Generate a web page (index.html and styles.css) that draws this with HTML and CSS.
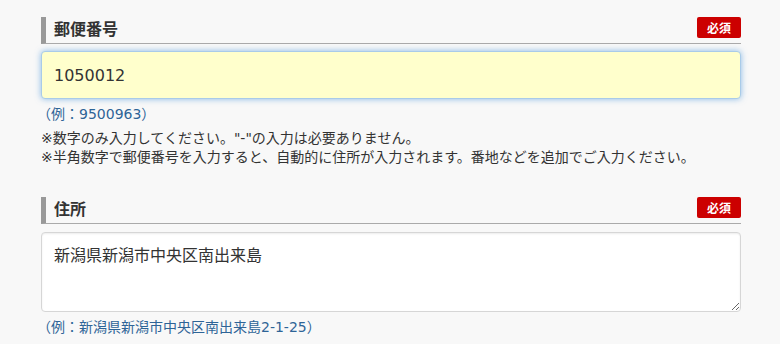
FILE: index.html
```html
<!DOCTYPE html>
<html lang="ja">
<head>
    <meta charset="UTF-8">
    <meta name="viewport" content="width=device-width, initial-scale=1.0">
    <title>住所入力</title>
    <link rel="stylesheet" href="styles.css">
</head>
<body>
    <form class="entry">
        <div class="field">
            <div class="field-head">
                <label for="zip" class="field-title">郵便番号</label>
                <span class="badge">必須</span>
            </div>
            <input type="text" id="zip" name="zip" class="text-box focused" value="1050012">
            <p class="sample">（例：9500963）</p>
            <p class="note">※数字のみ入力してください。"-"の入力は必要ありません。<br>※半角数字で郵便番号を入力すると、自動的に住所が入力されます。番地などを追加でご入力ください。</p>
        </div>

        <div class="field">
            <div class="field-head">
                <label for="address" class="field-title">住所</label>
                <span class="badge">必須</span>
            </div>
            <textarea id="address" name="address" class="text-box area">新潟県新潟市中央区南出来島</textarea>
            <p class="sample">（例：新潟県新潟市中央区南出来島2-1-25）</p>
        </div>
    </form>
</body>
</html>
```

FILE: styles.css
```css
body {
    margin: 0;
    padding: 17px 39px 0 41px;
    background-color: #f8f8f8;
    /* Verdana-like latin, CJK from Noto */
    font-family: "DejaVu Sans", "Noto Sans CJK JP", sans-serif;
    color: #333;
}
.field {
    margin-bottom: 30px;
}
/* heading row with the grey bar on the left and underline */
.field-head {
    display: flex;
    justify-content: space-between;
    align-items: flex-start;
    height: 26px;
    border-left: 5px solid #999;
    border-bottom: 1px solid #aaa;
    padding-left: 8px;
}
.field-title {
    font-family: "Noto Sans CJK JP", sans-serif;
    font-size: 16px;
    font-weight: bold;
    line-height: 23px;
    color: #333;
}
.badge {
    font-family: "Noto Sans CJK JP", sans-serif;
    background-color: #cc0000;
    color: #fff;
    font-size: 12px;
    font-weight: bold;
    line-height: 21px;
    height: 21px;
    padding: 0 10px;
    border-radius: 2px;
}
.text-box {
    display: block;
    width: 100%;
    box-sizing: border-box;
    margin: 7px 0 0;
    padding: 0 12px;
    border: 1px solid #d6d6d6;
    border-radius: 4px;
    background: #fff;
    font-family: inherit;
    font-size: 16px;
    color: #333;
    outline: none;
}
.focused {
    height: 48px;
    background-color: #ffffcc;
    border-color: #a9cbe9;
    box-shadow: 0 0 6px rgba(102, 165, 225, 0.75);
}
.area {
    height: 80px;
    margin-top: 8px;
    padding: 13px 12px;
    line-height: 20px;
    box-shadow: inset 0 1px 2px rgba(0, 0, 0, 0.08);
}
.sample {
    margin: 5px 0 0 -4px;
    font-size: 14px;
    line-height: 20px;
    color: #2e6497;
}
.note {
    margin: 5px 0 0;
    font-size: 14px;
    line-height: 19px;
    color: #333;
}
```
